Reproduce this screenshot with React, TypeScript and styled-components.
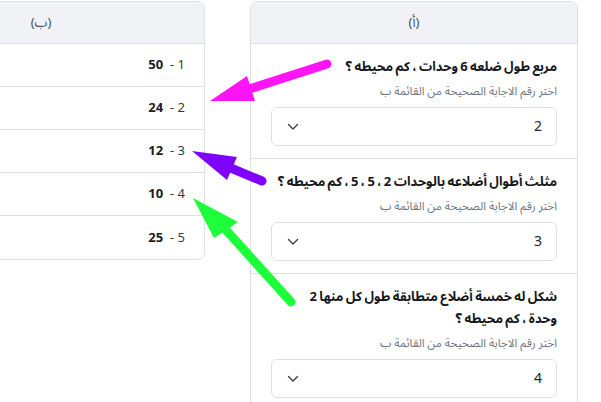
import React from 'react';
import styled, { createGlobalStyle } from 'styled-components';

const GlobalStyle = createGlobalStyle`
    html, body {
        margin: 0;
        padding: 0;
        background: #fff;
        overflow: hidden;
    }
    body {
        font-family: "Noto Sans Arabic", "Noto Sans", "DejaVu Sans", sans-serif;
        color: #212529;
    }
    * {
        box-sizing: border-box;
    }
`;

const Page = styled.div`
    position: relative;
    width: 601px;
    height: 402px;
    overflow: hidden;
`;

const Columns = styled.div`
    direction: rtl;
    display: flex;
    align-items: flex-start;
    gap: 45px;
    padding: 1px 23px 0 0;
`;

const Card = styled.section`
    flex: 0 0 328px;
    background: #fff;
    border: 1px solid #dcdfe3;
    border-radius: 7px;
    overflow: hidden;
`;

const CardHeader = styled.div`
    height: 42px;
    display: flex;
    align-items: center;
    justify-content: center;
    background: #f1f2f5;
    border-bottom: 1px solid #dcdfe3;
    font-size: 13px;
    color: #495057;
`;

const AnswerRow = styled.div`
    height: 43px;
    display: flex;
    align-items: center;
    padding: 0 19px;
    font-size: 13px;
    color: #343a40;
    &:not(:last-child) {
        border-bottom: 1px solid #dcdfe3;
    }
    & > b {
        color: #1b1e21;
        font-weight: 700;
    }
`;

const Question = styled.div`
    padding: 12px 20px 12px;
    &:not(:last-child) {
        border-bottom: 1px solid #dcdfe3;
    }
`;

const QuestionTitle = styled.h3<{ $endGap?: number }>`
    margin: 0 0 3px;
    padding-inline-end: ${(p) => p.$endGap ?? 0}px;
    font-size: 13px;
    line-height: 22px;
    font-weight: 700;
    word-spacing: -1px;
    color: #16181b;
`;

const Hint = styled.p`
    margin: 0 0 6px;
    font-size: 11.5px;
    line-height: 20px;
    color: #6c757d;
`;

const Select = styled.div`
    height: 39px;
    display: flex;
    align-items: center;
    justify-content: space-between;
    padding: 0 14px 0 15px;
    border: 1px solid #dcdfe3;
    border-radius: 6px;
    font-size: 14px;
    color: #212529;
`;

const Overlay = styled.svg`
    position: absolute;
    inset: 0;
    pointer-events: none;
`;

const Chevron = () => (
    <svg width="12" height="8" viewBox="0 0 12 8">
        <path d="M1.5 1.5 L6 6 L10.5 1.5" fill="none" stroke="#343a40" strokeWidth="1.3" strokeLinecap="round" strokeLinejoin="round"/>
    </svg>
);

const answers = ['50', '24', '12', '10', '25'];

const questions = [
    { title: 'مربع طول ضلعه  6 وحدات ، كم محيطه ؟', value: '2', gap: 0 },
    { title: 'مثلث أطوال أضلاعه بالوحدات 2 ، 5 ، 5 ، كم محيطه ؟', value: '3', gap: 0 },
    { title: 'شكل له خمسة أضلاع متطابقة طول كل منها 2 وحدة ، كم محيطه ؟', value: '4', gap: 20 },
];

const Arrow = ({ from, tip, left, right, color }: { from: [number, number]; tip: [number, number]; left: [number, number]; right: [number, number]; color: string }) => {
    const base: [number, number] = [(left[0] + right[0]) / 2, (left[1] + right[1]) / 2];
    return (
        <g>
            <line x1={from[0]} y1={from[1]} x2={base[0]} y2={base[1]} stroke={color} strokeWidth="9" strokeLinecap="round"/>
            <polygon points={`${tip[0]},${tip[1]} ${left[0]},${left[1]} ${right[0]},${right[1]}`} fill={color}/>
        </g>
    );
};

const App = () => {
    return (
        <Page>
            <GlobalStyle/>
            <Columns>
                <Card>
                    <CardHeader>(أ)</CardHeader>
                    {questions.map((q) => (
                        <Question key={q.value}>
                            <QuestionTitle $endGap={q.gap}>{q.title}</QuestionTitle>
                            <Hint>اختر رقم الاجابة الصحيحة من القائمة ب</Hint>
                            <Select>
                                <span>{q.value}</span>
                                <Chevron/>
                            </Select>
                        </Question>
                    ))}
                </Card>
                <Card>
                    <CardHeader>(ب)</CardHeader>
                    {answers.map((a, i) => (
                        <AnswerRow key={a}>
                            {i + 1}&nbsp;-&nbsp;&nbsp;<b>{a}</b>
                        </AnswerRow>
                    ))}
                </Card>
            </Columns>
            <Overlay width="601" height="402" viewBox="0 0 601 402">
                <Arrow from={[327, 64]} tip={[210, 101]} left={[247, 76]} right={[255, 101]} color="#ff14f5"/>
                <Arrow from={[262, 181]} tip={[192, 151]} left={[237, 157]} right={[227, 180]} color="#8000ff"/>
                <Arrow from={[291, 302]} tip={[193, 198]} left={[238, 222]} right={[214, 238]} color="#1eff3c"/>
            </Overlay>
        </Page>
    );
};

export default App;
